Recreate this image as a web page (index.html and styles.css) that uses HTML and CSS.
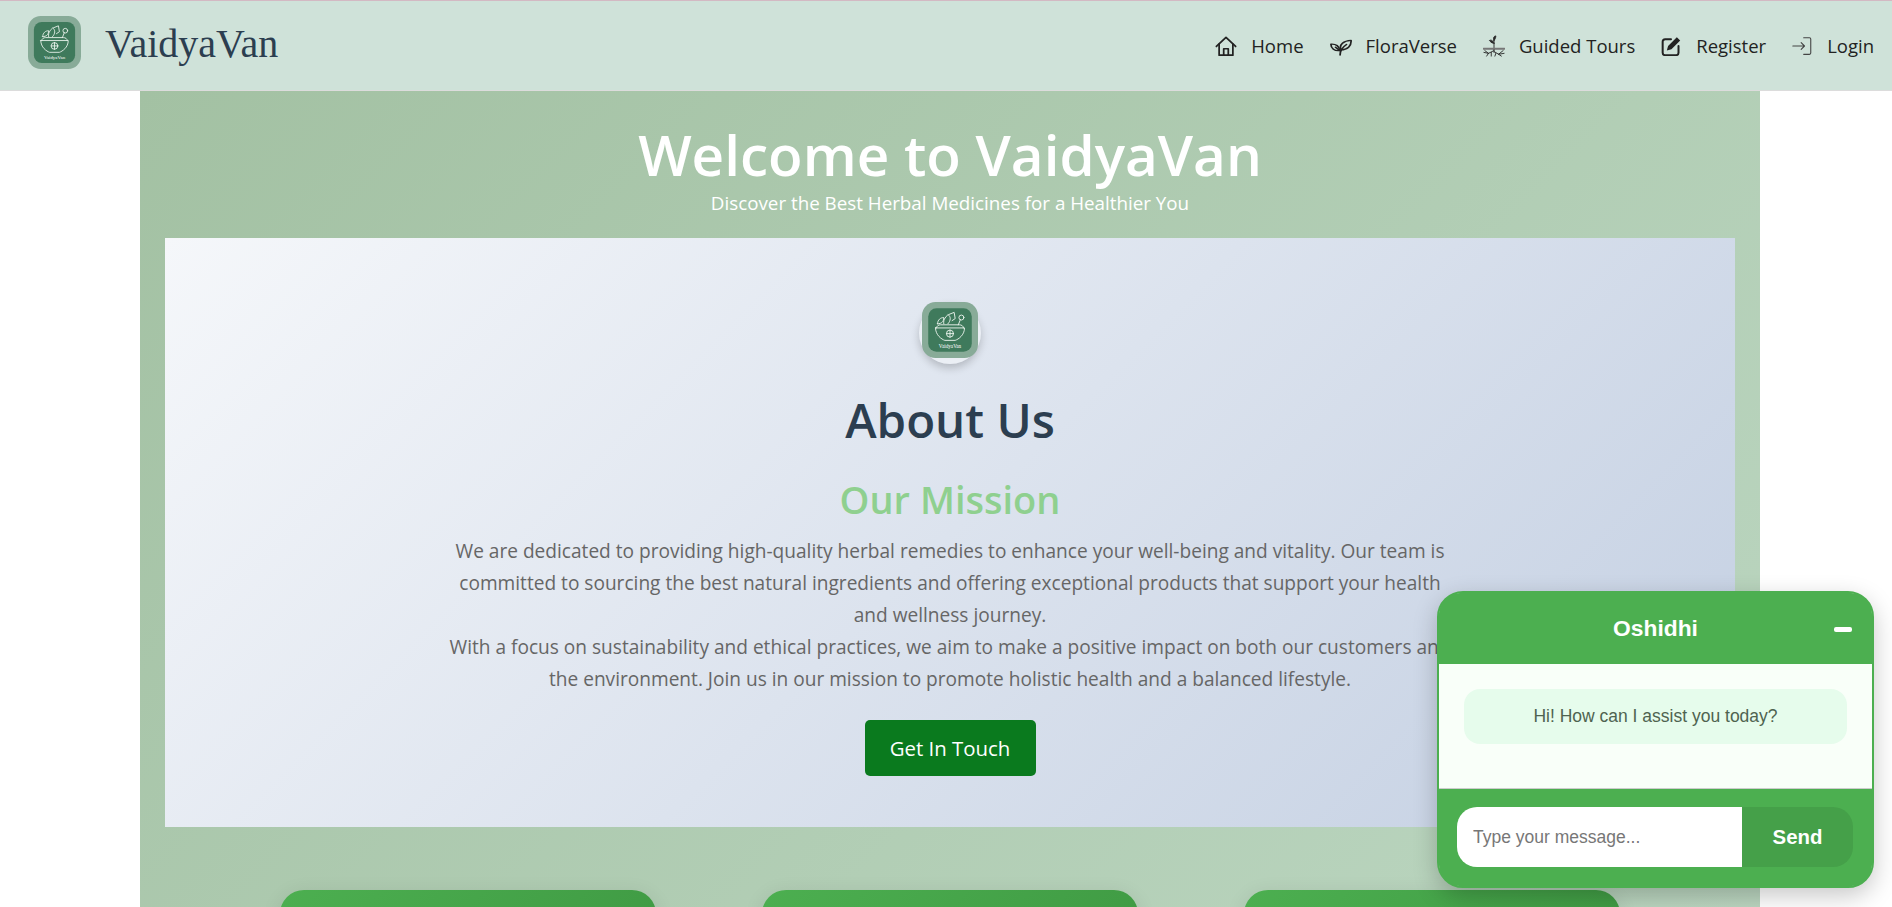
FILE: index.html
```html
<!DOCTYPE html>
<html lang="en">
<head>
  <meta charset="UTF-8" />
  <meta name="viewport" content="width=device-width, initial-scale=1.0" />
  <title>VaidyaVan - About Us</title>
  <link rel="stylesheet" href="styles.css">
</head>
<body>
  <svg class="defs" width="0" height="0">
    <symbol id="logo" viewBox="0 0 54 54">
      <rect width="54" height="54" rx="13" fill="#88ab98" />
      <rect x="6" y="6" width="42" height="42" rx="8" fill="#3f7a5c" />
      <g fill="none" stroke="#e9f2ec" stroke-width="0.9" stroke-linecap="round" stroke-linejoin="round">
        <path d="M13 25 H41 C41 32 35 36 32 37 H22 C19 36 13 32 13 25 Z" />
        <path d="M14 25 C14 23 16 22 18 22 H36 C38 22 40 23 40 25" />
        <circle cx="27" cy="30.5" r="3.4" />
        <path d="M27 27 V34 M23.6 30.5 H30.4" />
        <path d="M15 21 C15 17 18 15 21 15 C21 19 19 21 15 21 Z" />
        <path d="M21 21 C20 16 24 14 25 12 C28 14 28 18 25 21" />
        <path d="M26 12 L31 10 L32 16 L29 18" />
        <path d="M35 22 L37 17" />
        <circle cx="38" cy="15" r="2.4" />
      </g>
    </symbol>
  </svg>

  <nav class="navbar">
    <a class="brand" href="#">
      <svg class="brand-logo" viewBox="0 0 54 54">
        <use href="#logo" width="54" height="54" />
        <text class="logo-word" x="27" y="44" text-anchor="middle">VaidyaVan</text>
      </svg>
      <span class="brand-name">VaidyaVan</span>
    </a>
    <ul class="nav-links">
      <li>
        <svg class="nav-icon" viewBox="0 0 24 24" fill="none" stroke="#222" stroke-width="1.9" stroke-linejoin="round" stroke-linecap="round">
          <path d="M1.5 12.5 L12 2.5 L22.5 12.5" />
          <path d="M4.5 10 V22 H19.5 V10" />
          <path d="M9.5 22 V15 H14.5 V22" />
        </svg>
        Home
      </li>
      <li>
        <svg class="nav-icon" viewBox="0 0 24 24" fill="none" stroke="#222" stroke-width="1.9" stroke-linejoin="round" stroke-linecap="round">
          <g transform="translate(0 3) scale(1 .82)">
            <path d="M12 16 C9.5 9 15 4 23 3.5 C23.5 11 19 16 12 16 Z" />
            <path d="M10.5 17 C5 18 1 14 1 8.5 C6.5 8 10.5 11.5 10.5 17 Z" />
            <path d="M11 23 C11 18 13 13 18 9 M10.5 17 L6 12.5" />
          </g>
        </svg>
        FloraVerse
      </li>
      <li>
        <svg class="nav-icon" viewBox="0 0 24 24" fill="none" stroke="#2a2a2a" stroke-width="1" stroke-linecap="round" stroke-linejoin="round">
          <path d="M12 14 V3 M12 9 C9 9 8 7 7 6 C9 5 11 6 12 9 Z M12 6 C13 5 14 3 14 1 C12 1 11 3 12 6 Z" fill="#2a2a2a" />
          <path d="M0.5 15 H23.5" stroke="#777" stroke-width="2" />
          <path d="M12 16 V19 M12 17 L6 20 L1 19 M6 20 L4 23 M12 18 L17 21 L23 20 M17 21 L20 23 M9 19 L9 23 M14 20 L13 23 M2 17 L6 20 M22 17 L17 21" />
        </svg>
        Guided Tours
      </li>
      <li>
        <svg class="nav-icon nav-icon-small" viewBox="0 0 24 24" fill="none" stroke="#222" stroke-width="2.4" stroke-linecap="round">
          <path d="M12 4 H5 A3 3 0 0 0 2 7 V20 A3 3 0 0 0 5 23 H18 A3 3 0 0 0 21 20 V12" />
          <path d="M7 17.5 L8.5 12 L19 1.5 L23 5.5 L12.5 16 Z" fill="#222" stroke="none" />
        </svg>
        Register
      </li>
      <li>
        <svg class="nav-icon nav-icon-small" viewBox="0 0 24 24" fill="none" stroke="#444" stroke-width="1.3" stroke-linecap="round" stroke-linejoin="round">
          <path d="M1 12 H15 M11 8 L15 12 L11 16" />
          <path d="M14 2 H21 A1.5 1.5 0 0 1 22.5 3.5 V20.5 A1.5 1.5 0 0 1 21 22 H14" />
        </svg>
        Login
      </li>
    </ul>
  </nav>

  <main class="page">
    <header class="hero">
      <h1>Welcome to VaidyaVan</h1>
      <p>Discover the Best Herbal Medicines for a Healthier You</p>
    </header>

    <section class="about">
      <div class="about-badge">
        <svg class="about-logo" viewBox="0 0 54 54">
          <use href="#logo" width="54" height="54" />
          <text class="logo-word" x="27" y="44" text-anchor="middle">VaidyaVan</text>
        </svg>
      </div>
      <h2>About Us</h2>
      <h3>Our Mission</h3>
      <p>We are dedicated to providing high-quality herbal remedies to enhance your well-being and vitality. Our team is committed to sourcing the best natural ingredients and offering exceptional products that support your health and wellness journey.</p>
      <p>With a focus on sustainability and ethical practices, we aim to make a positive impact on both our customers and the environment. Join us in our mission to promote holistic health and a balanced lifestyle.</p>
      <a class="contact-btn" href="#">Get In Touch</a>
    </section>

    <section class="feature-row">
      <div class="feature-card"></div>
      <div class="feature-card"></div>
      <div class="feature-card"></div>
    </section>
  </main>

  <aside class="chat">
    <div class="chat-head">
      <span class="chat-title">Oshidhi</span>
      <button class="chat-min" type="button" aria-label="Minimise"></button>
    </div>
    <div class="chat-body">
      <div class="chat-bubble">Hi! How can I assist you today?</div>
    </div>
    <form class="chat-form">
      <input type="text" placeholder="Type your message..." />
      <button type="button">Send</button>
    </form>
  </aside>
</body>
</html>
```

FILE: styles.css
```css
* { box-sizing: border-box; }
html, body { height: 100%; }
body { margin: 0; overflow: hidden; background: #fff; font-family: "Open Sans", "Noto Sans", sans-serif; }
.defs { position: absolute; }
h1, h2, h3, p, ul { margin: 0; padding: 0; }

.navbar { height: 91px; display: flex; align-items: center; justify-content: space-between; padding: 0 18px 0 28px; background: #cfe2d9; border-top: 1px solid #d3b9c3; border-bottom: 1px solid #dcdcdc; }
.brand { display: flex; align-items: center; gap: 24px; text-decoration: none; margin-bottom: 4px; }
.brand-logo { width: 53px; height: 53px; display: block; margin-bottom: 2px; }
.logo-word { font-family: "Liberation Serif", serif; font-size: 5px; fill: #fff; }
.brand-name { font-family: "Liberation Serif", serif; font-size: 40px; color: #2c3e50; }
.nav-links { display: flex; align-items: center; gap: 26px; list-style: none; font-size: 18.5px; color: #222; }
.nav-links li { display: flex; align-items: center; gap: 14px; }
.nav-icon { width: 22px; height: 22px; }
.nav-icon-small { width: 20px; height: 20px; margin-right: 1px; }

.page { width: 1620px; margin-left: 140px; padding: 0 25px; background: linear-gradient(135deg, #a3c1a3, #c0dac6); min-height: 1300px; }
.hero { height: 147px; padding-top: 32px; text-align: center; color: #fff; }
.hero h1 { font-size: 56.6px; font-weight: 600; line-height: 64px; }
.hero p { margin-top: 4px; font-size: 18.8px; line-height: 24px; }

.about { height: 589px; padding-top: 64px; text-align: center; background: linear-gradient(135deg, #f5f7fa, #c3cfe2); }
.about-badge { width: 62px; height: 62px; margin: 0 auto 24px; border-radius: 50%; background: rgba(255,255,255,.35); box-shadow: 0 4px 8px rgba(0,0,0,.2); }
.about-logo { width: 56px; height: 56px; display: block; margin: 0 auto; }
.about h2 { font-size: 47.5px; font-weight: 600; line-height: 64px; color: #2c3e50; }
.about h3 { margin: 23px 0 12px; font-size: 38px; font-weight: 600; line-height: 48px; color: #8fd08f; }
.about p { width: 1010px; margin: 0 auto; font-size: 19.1px; line-height: 32px; color: #666; }
.contact-btn { display: inline-block; width: 171px; height: 56px; margin-top: 25px; line-height: 56px; border-radius: 5px; background: #0a7a1e; color: #fff; font-size: 20.4px; text-decoration: none; }

.feature-row { display: grid; grid-template-columns: repeat(3, 376px); justify-content: center; gap: 106px; margin-top: 63px; }
.feature-card { height: 300px; border-radius: 24px; background: linear-gradient(135deg, #4caf50, #388e3c); box-shadow: 0 4px 20px rgba(0,0,0,.1); }

.chat { position: fixed; right: 18px; bottom: 19px; width: 437px; height: 297px; display: flex; flex-direction: column; border: 2px solid #4caf50; border-radius: 26px; background: #f9fff9; font-family: "Liberation Sans", Arial, sans-serif; box-shadow: 0 8px 24px rgba(0,0,0,.22); }
.chat-head { height: 71px; position: relative; display: flex; align-items: center; justify-content: center; border-radius: 21px 21px 0 0; background: #4caf50; color: #fff; }
.chat-title { font-size: 22.8px; font-weight: 700; }
.chat-min { position: absolute; right: 20px; top: 34px; width: 18px; height: 5px; padding: 0; border: 0; border-radius: 2px; background: #fff; }
.chat-body { flex: 1; padding: 25px 25px 0; border-bottom: 1px solid #ccc; }
.chat-bubble { height: 55px; line-height: 55px; text-align: center; border-radius: 16px; background: #e6fcec; color: #4f6350; font-size: 17.5px; }
.chat-form { height: 97px; display: flex; padding: 18px 19px 0 18px; border-radius: 0 0 21px 21px; background: #4caf50; }
.chat-form input { width: 285px; height: 60px; padding: 0 16px; border: 0; border-radius: 20px 0 0 20px; background: #fff; font: 17.5px "Liberation Sans", Arial, sans-serif; }
.chat-form input::placeholder { color: #777; }
.chat-form button { width: 111px; height: 60px; border: 0; border-radius: 0 20px 20px 0; background: #45a049; color: #fff; font: 700 20.4px "Liberation Sans", Arial, sans-serif; }
```
